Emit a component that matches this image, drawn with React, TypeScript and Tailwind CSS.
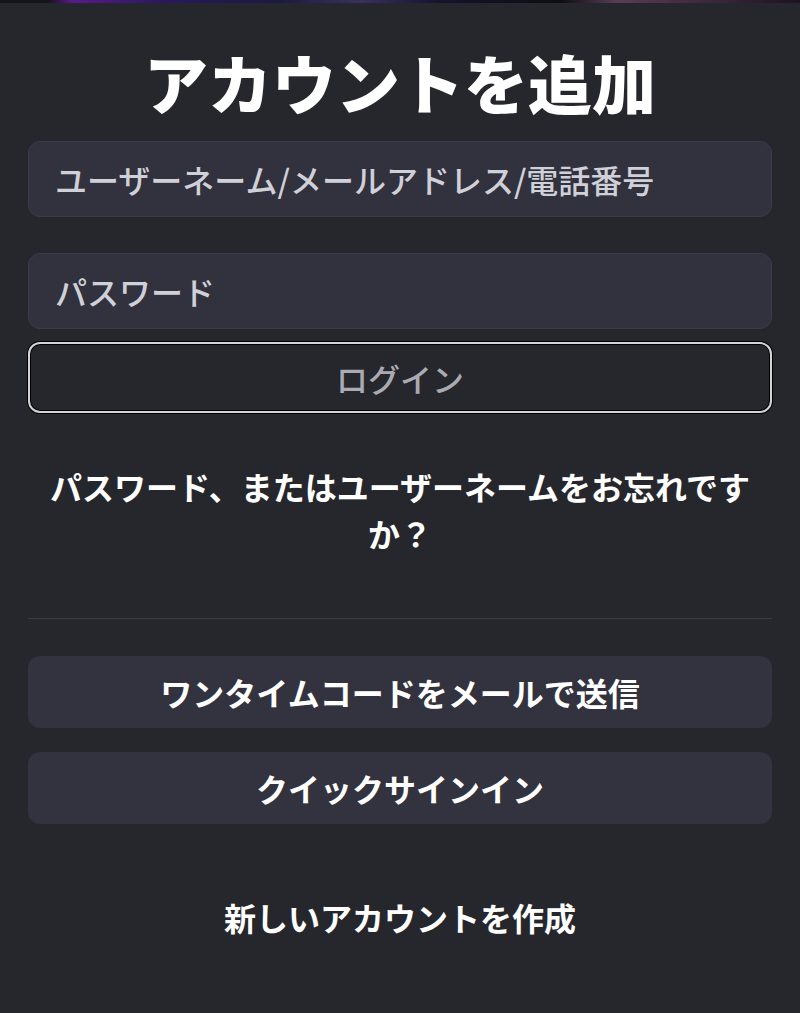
import React, { useState } from 'react'

const font = { fontFamily: '"Noto Sans CJK JP", "Noto Sans", sans-serif' }

export default function App() {
  const [user, setUser] = useState('')
  const [pass, setPass] = useState('')

  return (
    <div className="min-h-[1013px] w-full bg-[#26272c] text-white" style={font}>
      {/* background image peeking at the top */}
      <div className="h-[3px] w-full bg-[linear-gradient(90deg,#15131c_0%,#15131c_6%,#5a1a8a_9%,#2a1860_20%,#1a1a40_35%,#3a3060_45%,#14142c_55%,#0d0d12_70%,#5a3b55_77%,#3a2438_90%,#1a1420_100%)]" />

      <main className="flex flex-col px-[28px]">
        <h1 className="mt-[33px] text-center text-[64px] font-black leading-[90px]">
          アカウントを追加
        </h1>

        <input
          className="mt-[15px] h-[76px] w-full rounded-[12px] border border-[#3b3c48] bg-[#31323d] px-[26px] text-[32px] font-medium text-white outline-none placeholder:text-[#cfd0d8]"
          placeholder="ユーザーネーム/メールアドレス/電話番号"
          value={user}
          onChange={(e) => setUser(e.target.value)}
        />

        <input
          type="password"
          className="mt-[36px] h-[76px] w-full rounded-[12px] border border-[#3b3c48] bg-[#31323d] px-[26px] text-[32px] font-medium text-white outline-none placeholder:text-[#cfd0d8]"
          placeholder="パスワード"
          value={pass}
          onChange={(e) => setPass(e.target.value)}
        />

        <button className="mt-[13px] h-[71px] w-full rounded-[12px] border-2 border-[#d4d4d8] bg-[#26272c] text-[32px] font-medium text-[#a9aab2] shadow-[0_0_0_1px_#000,inset_0_0_0_1px_#000]">
          ログイン
        </button>

        <p className="mt-[50px] px-[12px] text-center text-[32px] font-bold leading-[47px]">
          パスワード、またはユーザーネームをお忘れですか？
        </p>

        <hr className="mt-[61px] border-t border-[#393a45]" />

        <button className="mt-[37px] h-[72px] w-full rounded-[12px] bg-[#32333e] text-[32px] font-bold">
          ワンタイムコードをメールで送信
        </button>

        <button className="mt-[24px] h-[72px] w-full rounded-[12px] bg-[#32333e] text-[32px] font-bold">
          クイックサインイン
        </button>

        <button className="mt-[69px] self-center text-[32px] font-bold">新しいアカウントを作成</button>
      </main>
    </div>
  )
}
